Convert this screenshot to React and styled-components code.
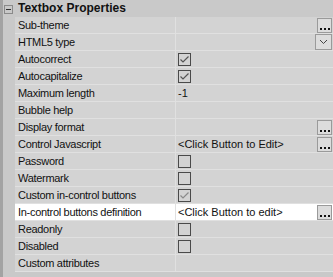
import React from "react";
import styled, { createGlobalStyle } from "styled-components";

const Global = createGlobalStyle`
  html, body { margin: 0; padding: 0; background: #c9c9c9; }
  body { font-family: "Liberation Sans", Arial, sans-serif; }
`;

const Panel = styled.div`
  width: 333px;
  height: 277px;
  background: #c9c9c9;
  border-left: 3px solid #a3a3a3;
  box-sizing: border-box;
  overflow: hidden;
`;

const Header = styled.div`
  display: grid;
  grid-template-columns: 12px 1fr;
  height: 17px;
  align-items: center;
  background: #c9c9c9;
`;

const Toggle = styled.div`
  width: 7px;
  height: 7px;
  border: 1px solid #8a8a8a;
  margin-left: 1px;
  margin-top: 1px;
  position: relative;
  &::after {
    content: "";
    position: absolute;
    left: 1px;
    top: 3px;
    width: 5px;
    height: 1px;
    background: #333;
  }
`;

const HeaderText = styled.div`
  font-weight: bold;
  font-size: 12px;
  color: #111;
  padding-left: 3px;
  line-height: 17px;
`;

const Row = styled.div`
  display: grid;
  grid-template-columns: 12px 161px 1fr;
  height: 17px;
`;

const Margin = styled.div`
  background: #c9c9c9;
`;

const Cell = styled.div`
  display: flex;
  align-items: center;
  height: 16px;
  border-bottom: 1px solid #e0e0e0;
  background: ${(p) => (p.$sel ? "#ffffff" : "#d3d3d3")};
  font-size: 11px;
  color: #111;
  white-space: nowrap;
  overflow: hidden;
`;

const NameCell = styled(Cell)`
  padding-left: 3px;
  border-right: 1px solid #e0e0e0;
  box-sizing: content-box;
  width: 157px;
  letter-spacing: -0.3px;
`;

const ValueCell = styled(Cell)`
  padding-left: 2px;
  padding-right: 1px;
  justify-content: space-between;
`;

const Check = styled.div`
  width: 11px;
  height: 11px;
  border: 1px solid #4a4a4a;
  display: flex;
  align-items: center;
  justify-content: center;
`;

const Btn = styled.div`
  width: 13px;
  height: 13px;
  border: 1px solid #9a9a9a;
  background: #dcdcdc;
  position: relative;
  flex: none;
`;

const Dots = styled.div`
  position: absolute;
  left: 2px;
  bottom: 2px;
  display: flex;
  gap: 2px;
  span {
    width: 2px;
    height: 2px;
    background: #111;
  }
`;

const DropBtn = styled(Btn)`
  width: 15px;
  height: 14px;
  display: flex;
  align-items: center;
  justify-content: center;
`;

const Ellipsis = () => (
  <Btn>
    <Dots>
      <span />
      <span />
      <span />
    </Dots>
  </Btn>
);

const CheckBox = ({ checked, light }) => (
  <Check>
    {checked && (
      <svg width="11" height="11" viewBox="0 0 11 11">
        <path d="M1.5 5.5 L4 8 L9.5 2.5" fill="none" stroke={light ? "#8a8a8a" : "#555"} strokeWidth="1.2" />
      </svg>
    )}
  </Check>
);

const rows = [
  { name: "Sub-theme", btn: "dots" },
  { name: "HTML5 type", btn: "drop" },
  { name: "Autocorrect", check: true },
  { name: "Autocapitalize", check: true },
  { name: "Maximum length", text: "-1" },
  { name: "Bubble help" },
  { name: "Display format", btn: "dots" },
  { name: "Control Javascript", text: "<Click Button to Edit>", btn: "dots" },
  { name: "Password", check: false },
  { name: "Watermark", check: false },
  { name: "Custom in-control buttons", check: true, light: true },
  { name: "In-control buttons definition", text: "<Click Button to edit>", btn: "dots", sel: true },
  { name: "Readonly", check: false },
  { name: "Disabled", check: false },
  { name: "Custom attributes" },
];

export default function App() {
  return (
    <>
      <Global />
      <Panel>
        <Header>
          <Toggle />
          <HeaderText>Textbox Properties</HeaderText>
        </Header>
        {rows.map((r) => (
          <Row key={r.name}>
            <Margin />
            <NameCell $sel={r.sel}>{r.name}</NameCell>
            <ValueCell $sel={r.sel}>
              <span>
                {r.check !== undefined ? <CheckBox checked={r.check} light={r.light} /> : r.text || ""}
              </span>
              {r.btn === "dots" && <Ellipsis />}
              {r.btn === "drop" && (
                <DropBtn>
                  <svg width="9" height="6" viewBox="0 0 9 6">
                    <path d="M1 1 L4.5 4.5 L8 1" fill="none" stroke="#444" strokeWidth="1" />
                  </svg>
                </DropBtn>
              )}
            </ValueCell>
          </Row>
        ))}
      </Panel>
    </>
  );
}
